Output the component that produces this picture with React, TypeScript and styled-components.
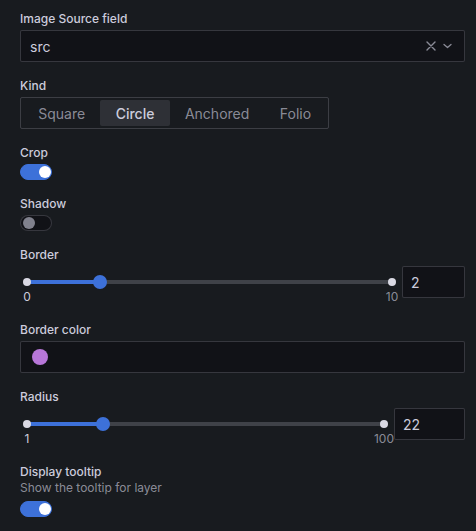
import React from 'react';
import styled, { createGlobalStyle } from 'styled-components';

const colors = {
  bg: '#181b1f',
  input: '#111217',
  border: 'rgba(204, 204, 220, 0.2)',
  text: '#ccccdc',
  textDim: 'rgba(204, 204, 220, 0.65)',
  primary: '#3d71d9',
  rail: 'rgba(204, 204, 220, 0.22)',
  dot: '#d9d9e3',
  selected: 'rgba(204, 204, 220, 0.12)',
};

const GlobalStyle = createGlobalStyle`
  html, body {
    margin: 0;
    padding: 0;
    background: ${colors.bg};
  }
  body {
    font-family: Inter, "Noto Sans", sans-serif;
    color: ${colors.text};
    -webkit-font-smoothing: antialiased;
  }
`;

const Pane = styled.div`
  width: 476px;
  min-height: 531px;
  box-sizing: border-box;
  padding: 11px 11px 0 20px;
  background: ${colors.bg};
`;

const Field = styled.div`
  margin-bottom: 16px;
`;

const LabelBlock = styled.div`
  margin-bottom: 4px;
`;

const Label = styled.div`
  font-size: 12px;
  font-weight: 500;
  line-height: 15px;
  color: ${colors.text};
`;

const Description = styled.div`
  font-size: 12px;
  line-height: 18px;
  color: ${colors.textDim};
`;

const InputBox = styled.div<{ $width?: number }>`
  box-sizing: border-box;
  height: 32px;
  width: ${({ $width }) => ($width ? `${$width}px` : '100%')};
  flex: ${({ $width }) => ($width ? '0 0 auto' : '1 1 auto')};
  display: flex;
  align-items: center;
  padding: 0 8px;
  background: ${colors.input};
  border: 1px solid ${colors.border};
  border-radius: 2px;
  font-size: 14px;
  color: ${colors.text};
`;

const SelectValue = styled.span`
  flex: 1;
  padding-left: 1px;
`;

const SelectIcons = styled.div`
  display: flex;
  align-items: center;
  gap: 7px;
  color: ${colors.textDim};
  margin-right: 4px;
`;

const RadioGroup = styled.div`
  display: inline-flex;
  box-sizing: border-box;
  height: 32px;
  padding: 2px;
  border: 1px solid ${colors.border};
  border-radius: 2px;
`;

const RadioOption = styled.div<{ $active?: boolean }>`
  height: 26px;
  padding: 0 15.25px;
  display: flex;
  align-items: center;
  border-radius: 2px;
  font-size: 14px;
  font-weight: ${({ $active }) => ($active ? 500 : 400)};
  color: ${({ $active }) => ($active ? colors.text : colors.textDim)};
  background: ${({ $active }) => ($active ? colors.selected : 'transparent')};
`;

const SwitchTrack = styled.div<{ $on?: boolean }>`
  position: relative;
  box-sizing: border-box;
  width: 32px;
  height: 16px;
  border-radius: 8px;
  background: ${({ $on }) => ($on ? colors.primary : colors.input)};
  border: 1px solid ${({ $on }) => ($on ? colors.primary : colors.border)};
`;

const SwitchKnob = styled.div<{ $on?: boolean }>`
  position: absolute;
  top: 50%;
  left: ${({ $on }) => ($on ? '18px' : '2px')};
  width: 12px;
  height: 12px;
  margin-top: -6px;
  border-radius: 50%;
  background: ${({ $on }) => ($on ? '#ffffff' : 'rgba(204, 204, 220, 0.6)')};
`;

const SliderRow = styled.div`
  display: flex;
  align-items: flex-start;
  gap: 3px;
  height: 40px;
`;

const SliderArea = styled.div`
  position: relative;
  flex: 1;
  height: 40px;
`;

const Rail = styled.div`
  position: absolute;
  left: 7px;
  right: 7px;
  top: 14px;
  height: 4px;
  border-radius: 2px;
  background: ${colors.rail};
`;

const TrackFill = styled.div`
  position: absolute;
  left: 0;
  top: 0;
  height: 4px;
  border-radius: 2px;
  background: ${colors.primary};
`;

const EndDot = styled.div<{ $side: 'left' | 'right' }>`
  position: absolute;
  top: -2px;
  ${({ $side }) => ($side === 'left' ? 'left: -4px;' : 'right: -4px;')}
  width: 8px;
  height: 8px;
  border-radius: 50%;
  background: ${colors.dot};
`;

const Thumb = styled.div`
  position: absolute;
  top: -5px;
  width: 14px;
  height: 14px;
  margin-left: -7px;
  border-radius: 50%;
  background: ${colors.primary};
`;

const Mark = styled.span<{ $side: 'left' | 'right'; $active?: boolean }>`
  position: absolute;
  top: 24px;
  ${({ $side }) => ($side === 'left' ? 'left: 7px;' : 'right: 7px;')}
  transform: translateX(${({ $side }) => ($side === 'left' ? '-50%' : '50%')});
  font-size: 12px;
  line-height: 14px;
  color: ${({ $active }) => ($active ? colors.text : colors.textDim)};
`;

const Swatch = styled.div<{ $color: string }>`
  width: 16px;
  height: 16px;
  border-radius: 50%;
  margin-left: 3px;
  background: ${({ $color }) => $color};
`;

const Switch = ({ on }: { on?: boolean }) => (
  <SwitchTrack $on={on}>
    <SwitchKnob $on={on} />
  </SwitchTrack>
);

const Slider = ({ min, max, value, inputWidth }: { min: number; max: number; value: number; inputWidth: number }) => {
  const pct = ((value - min) / (max - min)) * 100;
  return (
    <SliderRow>
      <SliderArea>
        <Rail>
          <TrackFill style={{ width: `${pct}%` }} />
          <EndDot $side="left" />
          <EndDot $side="right" />
          <Thumb style={{ left: `${pct}%` }} />
        </Rail>
        <Mark $side="left" $active>{min}</Mark>
        <Mark $side="right">{max}</Mark>
      </SliderArea>
      <InputBox $width={inputWidth}>{value}</InputBox>
    </SliderRow>
  );
};

const kinds = ['Square', 'Circle', 'Anchored', 'Folio'];

const App: React.FC = () => {
  return (
    <>
      <GlobalStyle />
      <Pane>
        <Field>
          <LabelBlock>
            <Label>Image Source field</Label>
          </LabelBlock>
          <InputBox>
            <SelectValue>src</SelectValue>
            <SelectIcons>
              <svg width="10" height="10" viewBox="0 0 10 10" fill="none" stroke="currentColor" strokeWidth="1.4" strokeLinecap="round">
                <path d="M1 1L9 9M9 1L1 9" />
              </svg>
              <svg width="9" height="6" viewBox="0 0 9 6" fill="none" stroke="currentColor" strokeWidth="1.3" strokeLinecap="round" strokeLinejoin="round">
                <path d="M1 1.5L4.5 4.5L8 1.5" />
              </svg>
            </SelectIcons>
          </InputBox>
        </Field>

        <Field>
          <LabelBlock>
            <Label>Kind</Label>
          </LabelBlock>
          <RadioGroup>
            {kinds.map((k) => (
              <RadioOption key={k} $active={k === 'Circle'}>
                {k}
              </RadioOption>
            ))}
          </RadioGroup>
        </Field>

        <Field>
          <LabelBlock>
            <Label>Crop</Label>
          </LabelBlock>
          <Switch on />
        </Field>

        <Field>
          <LabelBlock>
            <Label>Shadow</Label>
          </LabelBlock>
          <Switch />
        </Field>

        <Field>
          <LabelBlock>
            <Label>Border</Label>
          </LabelBlock>
          <Slider min={0} max={10} value={2} inputWidth={63} />
        </Field>

        <Field>
          <LabelBlock>
            <Label>Border color</Label>
          </LabelBlock>
          <InputBox>
            <Swatch $color="#b877d9" />
          </InputBox>
        </Field>

        <Field>
          <LabelBlock>
            <Label>Radius</Label>
          </LabelBlock>
          <Slider min={1} max={100} value={22} inputWidth={71} />
        </Field>

        <Field>
          <LabelBlock>
            <Label>Display tooltip</Label>
            <Description>Show the tooltip for layer</Description>
          </LabelBlock>
          <Switch on />
        </Field>
      </Pane>
    </>
  );
};

export default App;
